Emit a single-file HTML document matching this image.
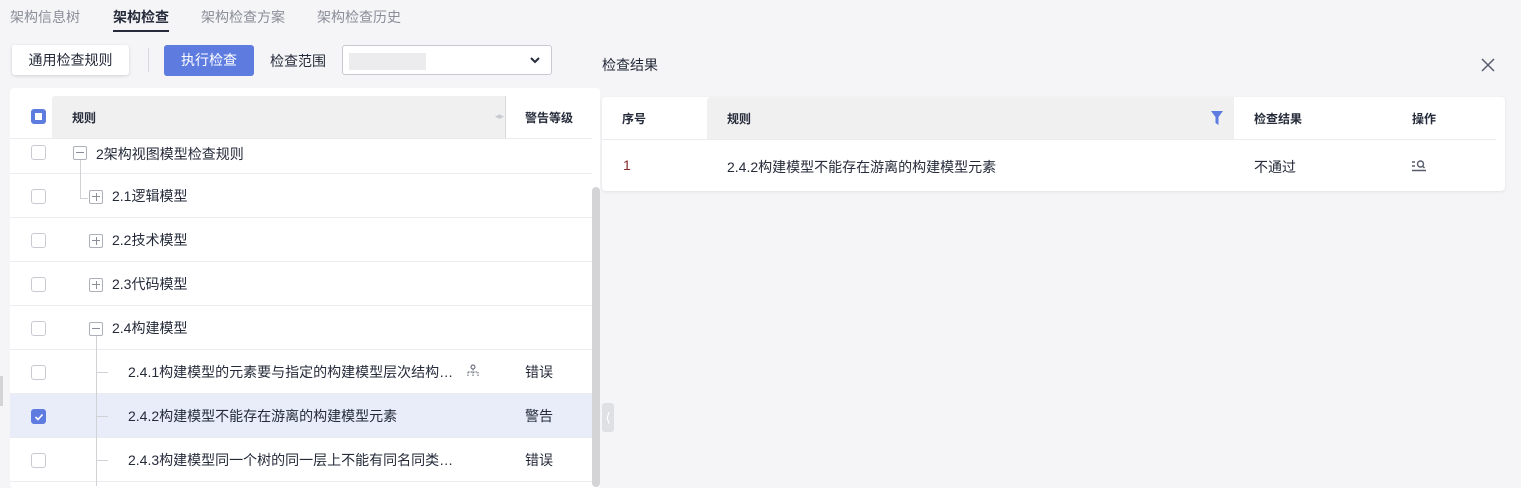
<!DOCTYPE html><html><head><meta charset="utf-8"><style>
*{box-sizing:border-box;margin:0;padding:0}
body{width:1521px;height:483px;overflow:hidden;background:#f5f5f7;font-family:"Liberation Sans","Noto Sans CJK SC",sans-serif;font-size:14px;color:#252b3a;position:relative}
.a{position:absolute}
.tab{top:7px;font-size:14px;color:#8a8e99}
.cb{position:absolute;left:31px;width:15px;height:15px;border:1px solid #c7cad0;border-radius:3px;background:#fff}
.row{position:absolute;left:10px;width:582px;height:44px;border-bottom:1px solid #ebecef;background:#fff}
.row span{position:absolute;top:12px}
.pm{position:absolute;width:14px;height:14px;border:1px solid #adb0b8;border-radius:2px;background:#fff}
.pm:before{content:"";position:absolute;left:2px;top:5px;width:8px;height:1px;background:#8a8e99}
.pm.p:after{content:"";position:absolute;left:5.5px;top:2px;width:1px;height:8px;background:#8a8e99}
.vl{position:absolute;width:1px;background:#d0d2d6}
.hl{position:absolute;height:1px;background:#d0d2d6}
.h{font-weight:bold;font-size:12px}
</style></head><body>
<div class="a tab" style="left:10px">架构信息树</div>
<div class="a tab" style="left:113px;color:#252b3a;font-weight:bold">架构检查</div>
<div class="a" style="left:113px;top:30px;width:56px;height:2px;background:#252b3a"></div>
<div class="a tab" style="left:201px">架构检查方案</div>
<div class="a tab" style="left:317px">架构检查历史</div>

<div class="a" style="left:12px;top:45px;width:117px;height:30px;background:#fff;border-radius:3px;box-shadow:0 1px 3px rgba(0,0,0,.15);text-align:center;line-height:30px">通用检查规则</div>
<div class="a" style="left:148px;top:48px;width:1px;height:24px;background:#d8d9dc"></div>
<div class="a" style="left:164px;top:45px;width:90px;height:31px;background:#5e7ce0;border-radius:3px;color:#fff;text-align:center;line-height:31px">执行检查</div>
<div class="a" style="left:270px;top:51px">检查范围</div>
<div class="a" style="left:342px;top:45px;width:210px;height:30px;background:#fff;border:1px solid #c7cad0;border-radius:3px"></div>
<div class="a" style="left:349px;top:53px;width:77px;height:17px;background:#ececee"></div>
<svg class="a" style="left:529px;top:56px" width="12" height="9"><path d="M2 2 L6 6 L10 2" stroke="#252b3a" stroke-width="2" fill="none"/></svg>

<div class="a" style="left:10px;top:88px;width:590px;height:400px;background:#fff;border-radius:4px"></div>
<div class="a" style="left:52px;top:96px;width:453px;height:42px;background:#f0f0f0;border-radius:3px 0 0 0"></div>
<div class="a" style="left:505px;top:96px;width:1px;height:42px;background:#d8d9dc"></div>
<div class="a" style="left:10px;top:138px;width:582px;height:1px;background:#ebecef"></div>
<div class="cb" style="top:109px;background:#5e7ce0;border-color:#5e7ce0"><div style="position:absolute;left:3px;top:3px;width:7px;height:7px;background:#fff"></div></div>
<div class="a h" style="left:72px;top:109px">规则</div>
<div class="a" style="left:495px;top:111px;font-size:9px;color:#c7cad0">◂▸</div>
<div class="a h" style="left:525px;top:109px">警告等级</div>

<div class="row" style="top:139px;height:35px"><span style="top:5px;left:86px">2架构视图模型检查规则</span></div>
<div class="row" style="top:174px"><span style="left:102px">2.1逻辑模型</span></div>
<div class="row" style="top:218px"><span style="left:102px">2.2技术模型</span></div>
<div class="row" style="top:262px"><span style="left:102px">2.3代码模型</span></div>
<div class="row" style="top:306px"><span style="left:102px">2.4构建模型</span></div>
<div class="row" style="top:350px"><span style="left:118px">2.4.1构建模型的元素要与指定的构建模型层次结构…</span><span style="left:515px">错误</span></div>
<div class="row" style="top:394px;background:#e9edfa"><span style="left:118px">2.4.2构建模型不能存在游离的构建模型元素</span><span style="left:515px">警告</span></div>
<div class="row" style="top:438px"><span style="left:118px">2.4.3构建模型同一个树的同一层上不能有同名同类…</span><span style="left:515px">错误</span></div>

<div class="cb" style="top:145px"></div>
<div class="cb" style="top:189px"></div>
<div class="cb" style="top:233px"></div>
<div class="cb" style="top:277px"></div>
<div class="cb" style="top:321px"></div>
<div class="cb" style="top:365px"></div>
<div class="cb" style="top:409px;background:#5e7ce0;border-color:#5e7ce0"><svg style="position:absolute;left:1px;top:1px" width="12" height="12"><path d="M2.5 6 L5 8.5 L9.5 3.5" stroke="#fff" stroke-width="1.6" fill="none"/></svg></div>
<div class="cb" style="top:453px"></div>

<div class="vl" style="left:80px;top:160px;height:38px"></div>
<div class="hl" style="left:80px;top:198px;width:8px"></div>
<div class="pm" style="left:73px;top:146px"></div>
<div class="pm p" style="left:89px;top:190px"></div>
<div class="pm p" style="left:89px;top:234px"></div>
<div class="pm p" style="left:89px;top:278px"></div>
<div class="pm" style="left:89px;top:322px"></div>
<div class="vl" style="left:96px;top:336px;height:150px"></div>
<div class="hl" style="left:96px;top:372px;width:12px"></div>
<div class="hl" style="left:96px;top:416px;width:12px"></div>
<div class="hl" style="left:96px;top:460px;width:12px"></div>
<svg class="a" style="left:466px;top:364px" width="14" height="14"><circle cx="7" cy="3" r="2" stroke="#575d6c" fill="none"/><path d="M7 5V8M2 8H12M2 8V12M7 8V12M12 8V12" stroke="#575d6c" stroke-dasharray="1.5 1" fill="none"/></svg>

<div class="a" style="left:592px;top:187px;width:8px;height:300px;background:#d4d4d6;border-radius:4px"></div>
<div class="a" style="left:0;top:376px;width:3px;height:30px;background:#d4d4d6"></div>
<div class="a" style="left:602px;top:403px;width:12px;height:29px;background:#dfe0e3;border-radius:3px;color:#fff;font-size:13px;text-align:center;line-height:29px">⟨</div>

<div class="a" style="left:602px;top:55px">检查结果</div>
<svg class="a" style="left:1481px;top:58px" width="14" height="14"><path d="M1 1L13 13M13 1L1 13" stroke="#575d6c" stroke-width="1.5"/></svg>

<div class="a" style="left:602px;top:97px;width:903px;height:94px;background:#fff;border-radius:4px;box-shadow:0 1px 3px rgba(0,0,0,.08)"></div>
<div class="a" style="left:707px;top:97px;width:527px;height:42px;background:#f0f0f0;border-radius:4px 0 0 0"></div>
<div class="a" style="left:602px;top:139px;width:894px;height:1px;background:#ebecef"></div>
<div class="a h" style="left:622px;top:110px">序号</div>
<div class="a h" style="left:727px;top:110px">规则</div>
<svg class="a" style="left:1211px;top:111px" width="12" height="14"><path d="M0 0H12L7.5 6V14L4.5 12V6Z" fill="#5e7ce0"/></svg>
<div class="a h" style="left:1254px;top:110px">检查结果</div>
<div class="a h" style="left:1412px;top:110px">操作</div>
<div class="a" style="left:623px;top:157px;color:#8a2b2b">1</div>
<div class="a" style="left:727px;top:157px">2.4.2构建模型不能存在游离的构建模型元素</div>
<div class="a" style="left:1254px;top:157px">不通过</div>
<svg class="a" style="left:1412px;top:159px" width="15" height="13"><path d="M0 3H3M0 7H3M0 11.5H14" stroke="#575d6c" stroke-width="1.4"/><circle cx="8.5" cy="5" r="3" stroke="#575d6c" stroke-width="1.4" fill="none"/><path d="M10.5 7L12.5 9" stroke="#575d6c" stroke-width="1.4"/></svg>
</body></html>
